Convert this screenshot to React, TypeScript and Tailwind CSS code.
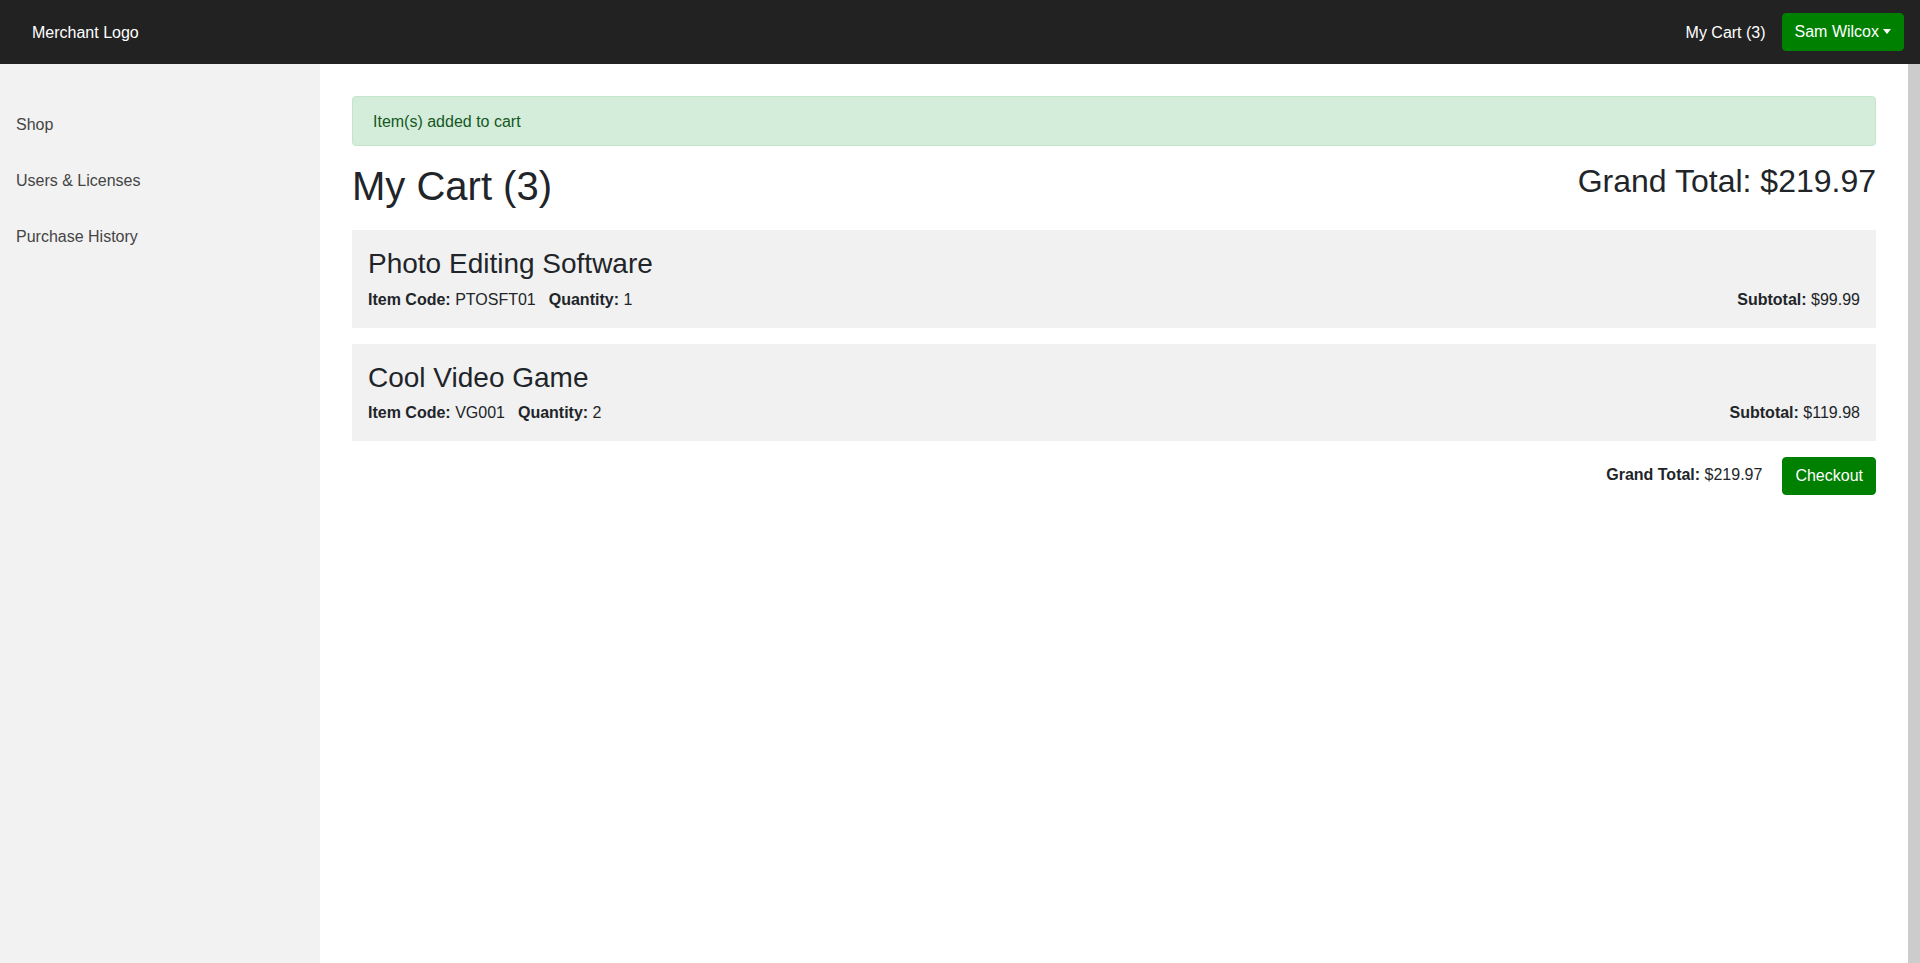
import React from "react";

const font = { fontFamily: '"Liberation Sans", Arial, Helvetica, sans-serif' };

function Caret() {
  return (
    <span className="inline-block ml-[4px] align-[3px] w-0 h-0 border-t-[5px] border-t-white border-x-[4.5px] border-x-transparent border-b-0" />
  );
}

function CartItem({ name, code, qty, subtotal }: { name: string; code: string; qty: number; subtotal: string }) {
  return (
    <div className="bg-[#f1f1f1] p-4 mb-4">
      <h3 className="text-[28px] leading-[33.6px] font-normal pt-[1px] mb-[7px]">{name}</h3>
      <div className="flex justify-between text-base leading-6">
        <div>
          <span className="font-bold">Item Code:</span> {code}
          <span className="font-bold ml-[13px]">Quantity:</span> {qty}
        </div>
        <div>
          <span className="font-bold">Subtotal:</span> {subtotal}
        </div>
      </div>
    </div>
  );
}

export default function App() {
  return (
    <div style={font} className="h-[963px] w-[1920px] flex flex-col text-[#212529] overflow-hidden">
      <header className="h-16 shrink-0 bg-[#222222] flex items-center justify-between pl-8 pr-4 text-white text-base leading-6">
        <div className="pt-[2px]">Merchant Logo</div>
        <div className="flex items-center">
          <span className="mr-4 pt-[2px]">My Cart (3)</span>
          <button className="bg-[#008000] border border-[#008000] rounded px-3 py-1.5 text-white leading-6 text-base">
            Sam Wilcox
            <Caret />
          </button>
        </div>
      </header>
      <div className="flex flex-1">
        <aside className="w-[320px] shrink-0 bg-[#f2f2f2] pt-[33px] text-[#444] text-base leading-6">
          <div className="px-4 py-4">Shop</div>
          <div className="px-4 py-4">Users &amp; Licenses</div>
          <div className="px-4 py-4">Purchase History</div>
        </aside>
        <main className="flex-1 bg-white p-8">
          <div className="border border-[#c3e6cb] bg-[#d4edda] text-[#155724] rounded px-5 pt-[13px] pb-[11px] text-base leading-6 mb-4">
            Item(s) added to cart
          </div>
          <div className="flex justify-between items-start mb-5">
            <h1 className="text-[40px] leading-[48px] font-normal">My Cart (3)</h1>
            <h2 className="text-[32px] leading-[38.4px] font-normal">Grand Total: $219.97</h2>
          </div>
          <CartItem name="Photo Editing Software" code="PTOSFT01" qty={1} subtotal="$99.99" />
          <CartItem name="Cool Video Game" code="VG001" qty={2} subtotal="$119.98" />
          <div className="flex justify-end items-center text-base leading-6">
            <div className="mr-5 -mt-[2px]">
              <span className="font-bold">Grand Total:</span> $219.97
            </div>
            <button className="bg-[#008000] border border-[#008000] rounded px-3 py-1.5 text-white leading-6 text-base">
              Checkout
            </button>
          </div>
        </main>
        <div className="w-3 shrink-0 bg-[#cccccc]" />
      </div>
    </div>
  );
}
